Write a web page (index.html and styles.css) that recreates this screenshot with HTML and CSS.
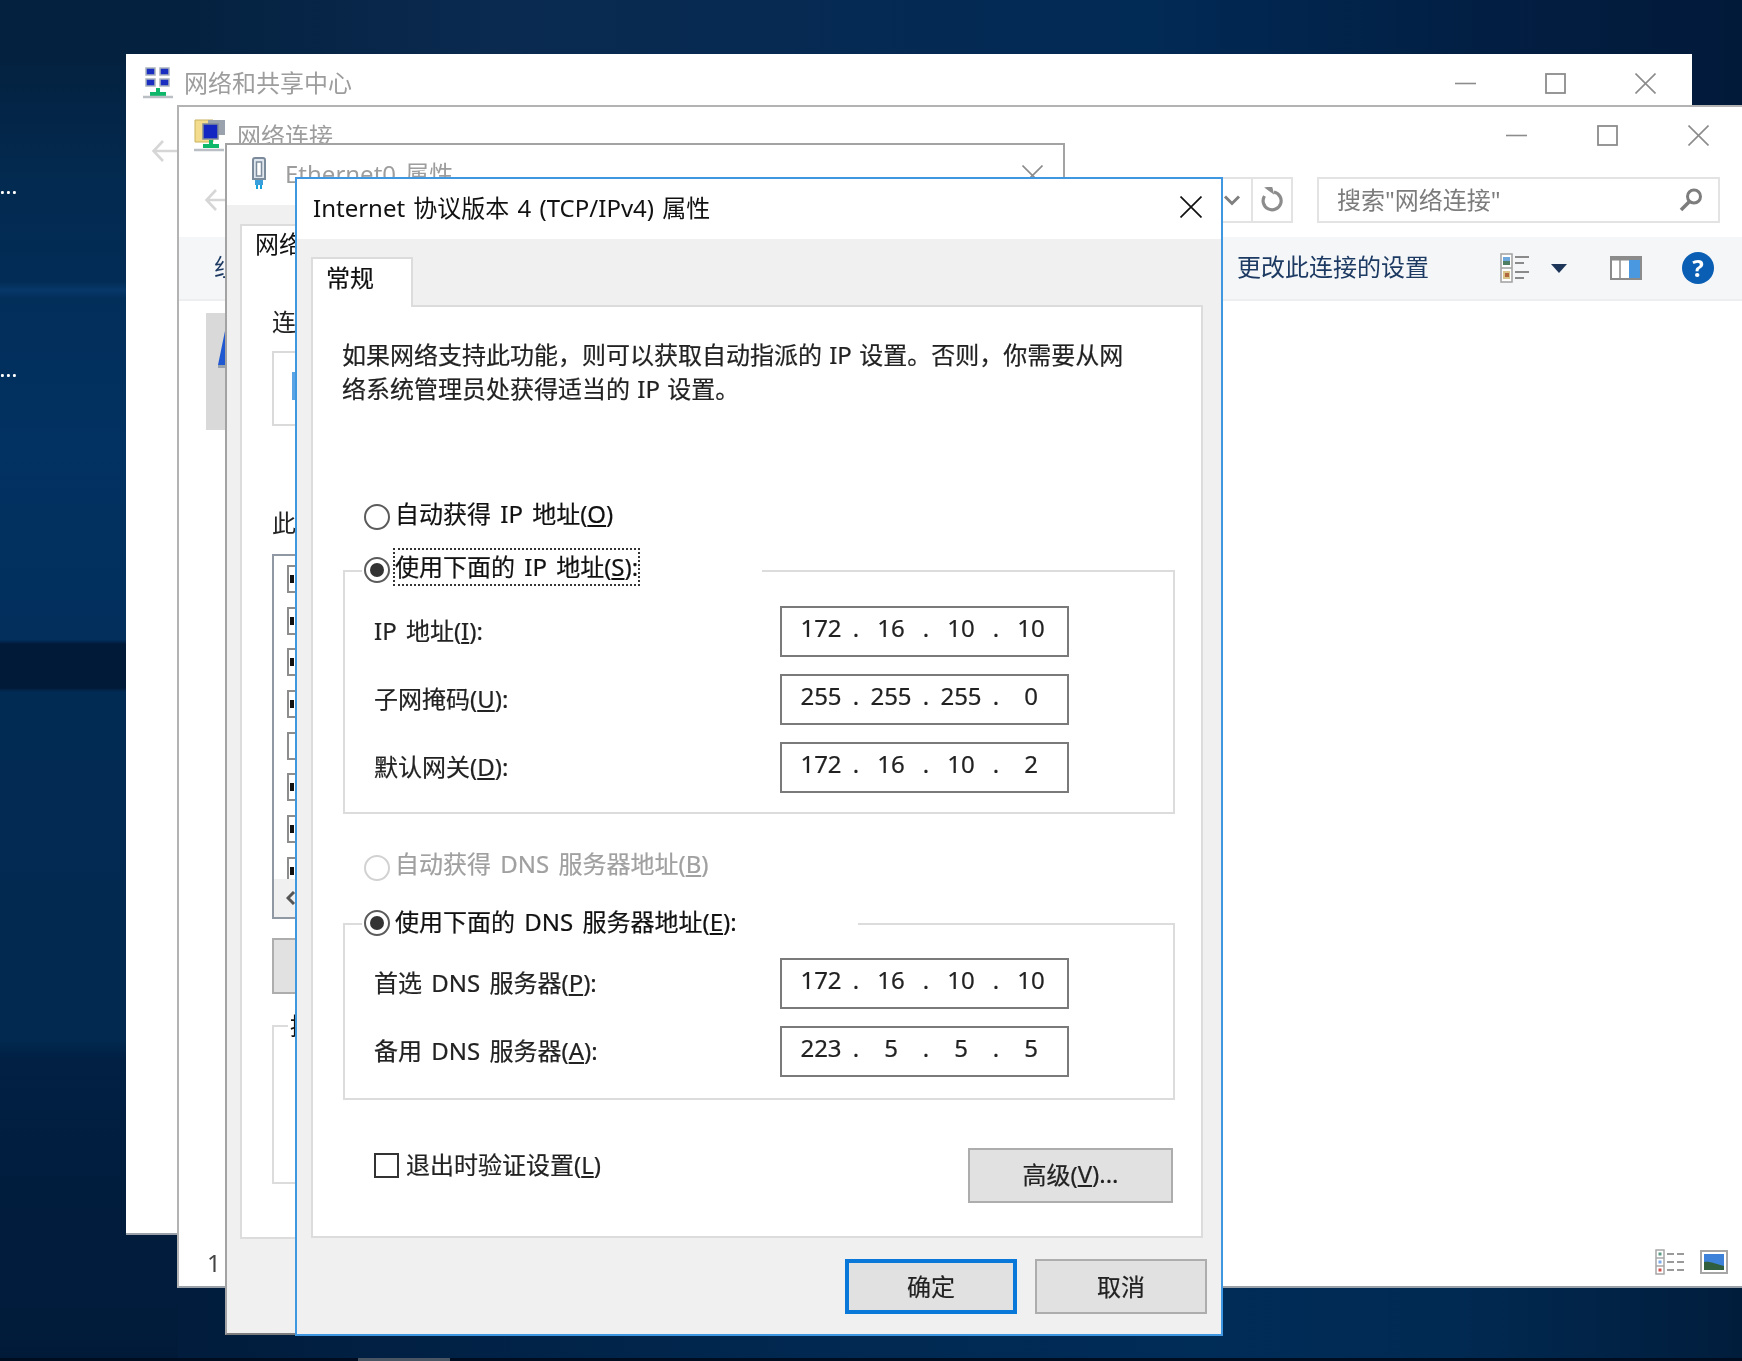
FILE: index.html
```html
<!DOCTYPE html>
<html lang="zh-CN">
<head>
<meta charset="utf-8">
<title>Internet 协议版本 4 (TCP/IPv4) 属性</title>
<link rel="stylesheet" href="styles.css">
</head>
<body>
<svg class="defs" width="0" height="0" aria-hidden="true">
  <symbol id="i-min" viewBox="0 0 21 21"><path d="M0 10.5h21" stroke="currentColor" stroke-width="1.6"/></symbol>
  <symbol id="i-max" viewBox="0 0 21 21"><rect x="1" y="1" width="19" height="19" fill="none" stroke="currentColor" stroke-width="1.8"/></symbol>
  <symbol id="i-close" viewBox="0 0 21 21"><path d="M.5.5l20 20M20.5.5l-20 20" fill="none" stroke="currentColor" stroke-width="1.6"/></symbol>
  <symbol id="i-back" viewBox="0 0 26 22"><path d="M11 1L1.500 11l9.500 10M2 11h24" fill="none" stroke="currentColor" stroke-width="2.600"/></symbol>
</svg>
<main class="desktop">
  <span class="desk-label desk-label-a">...</span>
  <span class="desk-label desk-label-b">...</span>
  <span class="task-chip"></span>

  <section class="window win-center">
    <header class="titlebar">
      <svg class="app-icon" width="30" height="32" viewBox="0 0 30 32">
        <g fill="#1a2fc0" stroke="#a9b3bd" stroke-width="1.500">
          <rect x="3" y="1" width="9" height="7"/><rect x="17" y="1" width="9" height="7"/>
          <rect x="3" y="12" width="9" height="7"/><rect x="17" y="12" width="9" height="7"/>
        </g>
        <path d="M13 21h4v4h6v4H7v-4h6z" fill="#0fb76a"/>
        <path d="M0 30h30" stroke="#b9bfc4" stroke-width="2.500"/>
      </svg>
      <h2 class="win-title">网络和共享中心</h2>
      <div class="win-controls">
        <svg class="ctl"><use href="#i-min"/></svg>
        <svg class="ctl"><use href="#i-max"/></svg>
        <svg class="ctl"><use href="#i-close"/></svg>
      </div>
    </header>
    <div class="nav-one"><svg class="back" width="26" height="22"><use href="#i-back"/></svg></div>
  </section>

  <section class="window win-conn">
    <header class="titlebar titlebar-conn">
      <svg class="app-icon" width="33" height="33" viewBox="0 0 33 33">
        <path d="M1 1h18v22H1z" fill="#f3dc8e" stroke="#c9b25c"/>
        <rect x="14" y="1" width="17" height="15" fill="#9aa3ad"/>
        <rect x="9" y="5" width="15" height="15" fill="#1326c2" stroke="#7f8a99" stroke-width="1.500"/>
        <path d="M15 21h4v4h6v4H9v-4h6z" fill="#0fb76a"/>
        <path d="M0 31h30" stroke="#b9bfc4" stroke-width="2.500"/>
      </svg>
      <h2 class="win-title">网络连接</h2>
      <div class="win-controls">
        <svg class="ctl"><use href="#i-min"/></svg>
        <svg class="ctl"><use href="#i-max"/></svg>
        <svg class="ctl"><use href="#i-close"/></svg>
      </div>
    </header>
    <div class="address-row">
      <svg class="back" width="26" height="22"><use href="#i-back"/></svg>
      <div class="address-box">
        <svg class="chevron" width="18" height="11" viewBox="0 0 18 11"><path d="M2 1.500l7 7 7-7" fill="none" stroke="#7f7f7f" stroke-width="3"/></svg>
        <span class="refresh">
          <svg width="24" height="26" viewBox="0 0 24 26"><path d="M13 5a9 9 0 1 1-9.500 4" fill="none" stroke="#8c8c8c" stroke-width="3.200"/><path d="M5 1l7 5-1.500-6z" fill="#8c8c8c" stroke="#8c8c8c" stroke-width="1.500"/></svg>
        </span>
      </div>
      <div class="search-box">
        <span class="search-text">搜索"网络连接"</span>
        <svg width="26" height="26" viewBox="0 0 26 26"><circle cx="16" cy="9.500" r="6.500" fill="none" stroke="#7d7d7d" stroke-width="3"/><path d="M11.500 14.500L3 23" stroke="#7d7d7d" stroke-width="3.500"/></svg>
      </div>
    </div>
    <div class="toolbar">
      <span class="tool-text">组织</span>
      <span class="tool-spacer"></span>
      <span class="tool-text">更改此连接的设置</span>
      <svg class="tool-views" width="30" height="30" viewBox="0 0 30 30">
        <rect x="1" y="1" width="11" height="28" fill="#fff" stroke="#a6a6a6" stroke-width="1.600"/>
        <path d="M1 15h11" stroke="#a6a6a6" stroke-width="1.600"/>
        <rect x="3" y="4" width="7" height="4" fill="#6ea7dc"/><rect x="3" y="8" width="7" height="4" fill="#4f7f62"/>
        <rect x="3" y="18" width="7" height="8" fill="#d9c48a"/><rect x="5" y="20" width="4" height="4" fill="#b0683c"/>
        <path d="M15 4h14M15 10h9M15 19h14M15 25h9" stroke="#8a8a8a" stroke-width="1.800"/>
      </svg>
      <svg class="tool-caret" width="16" height="9" viewBox="0 0 16 9"><path d="M0 0h16L8 9z" fill="#1c3559"/></svg>
      <svg class="tool-pane" width="32" height="24" viewBox="0 0 32 24">
        <rect x="1" y="1" width="30" height="22" fill="#fff" stroke="#8b8b8b" stroke-width="2"/>
        <path d="M1 3h30" stroke="#8b8b8b" stroke-width="3"/>
        <path d="M10 4v18" stroke="#8b8b8b" stroke-width="1.500"/>
        <rect x="19" y="4" width="11" height="18" fill="#4a98e0"/>
      </svg>
      <span class="tool-help">?</span>
    </div>
    <div class="conn-body">
      <div class="conn-item">
        <svg width="20" height="38" viewBox="0 0 20 38"><path d="M8 0h12v34H1z" fill="#1f58d0"/><path d="M1 34h19v3H1z" fill="#9aa3ad"/></svg>
      </div>
    </div>
    <footer class="statusbar">
      <span class="status-count">1</span>
      <svg class="status-list" width="30" height="26" viewBox="0 0 30 26">
        <rect x="1" y="1" width="8" height="24" fill="#fff" stroke="#a6a6a6" stroke-width="1.500"/>
        <path d="M1 9h8M1 17h8" stroke="#a6a6a6" stroke-width="1.500"/>
        <path d="M12 5h7M22 5h7M12 13h7M22 13h7M12 21h7M22 21h7" stroke="#9a9a9a" stroke-width="2.200"/>
        <rect x="3.500" y="3.500" width="3" height="3" fill="#5a9a86"/><rect x="3.500" y="11.500" width="3" height="3" fill="#79a9ea"/><rect x="3.500" y="19.500" width="3" height="3" fill="#d2504a"/>
      </svg>
      <svg class="status-pic" width="28" height="24" viewBox="0 0 28 24">
        <rect x="1" y="1" width="26" height="22" fill="#fff" stroke="#a6a6a6" stroke-width="2"/>
        <rect x="4" y="4" width="20" height="16" fill="#3d82d8"/>
        <path d="M4 12c6-1 11 2 20 4v4H4z" fill="#2f5f3f"/>
      </svg>
    </footer>
  </section>

  <section class="window win-eth">
    <header class="titlebar titlebar-eth">
      <svg class="app-icon" width="18" height="32" viewBox="0 0 18 32">
        <path d="M3 3a2 2 0 0 1 2-2h8a2 2 0 0 1 2 2v19H3z" fill="#dfe6ee" stroke="#7c8b9c" stroke-width="2"/>
        <rect x="6.500" y="5" width="5" height="14" fill="#fff" stroke="#7c8b9c" stroke-width="1.500"/>
        <path d="M5 23h8v5H5z" fill="#3a9fdb"/><path d="M6 28h2v4H6zM10 28h2v4h-2z" fill="#16a0d8"/>
      </svg>
      <h2 class="win-title">Ethernet0 属性</h2>
      <svg class="ctl eth-close"><use href="#i-close"/></svg>
    </header>
    <div class="eth-body">
      <div class="tabstrip"><span class="tab tab-eth">网络</span></div>
      <div class="eth-panel">
        <p class="eth-label">连</p>
        <div class="eth-adapter"><span class="adapter-chip"></span></div>
        <p class="eth-label eth-label-list">此</p>
        <ul class="eth-list">
          <li class="eth-row on"></li>
          <li class="eth-row on"></li>
          <li class="eth-row on"></li>
          <li class="eth-row on"></li>
          <li class="eth-row"></li>
          <li class="eth-row on"></li>
          <li class="eth-row on"></li>
          <li class="eth-row on"></li>
          <li class="eth-scroll"><svg width="10" height="14" viewBox="0 0 10 14"><path d="M8 1L2 7l6 6" fill="none" stroke="#555" stroke-width="3"/></svg></li>
        </ul>
        <button class="eth-install" type="button"></button>
        <fieldset class="eth-desc"><legend class="eth-desc-title">描</legend></fieldset>
      </div>
    </div>
  </section>

  <section class="window dialog" aria-label="Internet 协议版本 4 (TCP/IPv4) 属性">
    <header class="dialog-title">
      <h1 class="dialog-heading">Internet 协议版本 4 (TCP/IPv4) 属性</h1>
      <svg class="ctl dialog-close"><use href="#i-close"/></svg>
    </header>
    <div class="dialog-body">
      <div class="tabstrip"><span class="tab">常规</span></div>
      <div class="panel">
        <p class="intro">如果网络支持此功能，则可以获取自动指派的 IP 设置。否则，你需要从网<br>络系统管理员处获得适当的 IP 设置。</p>

        <div class="radio radio-first"><span class="dot"></span><span>自动获得 IP 地址(<u>O</u>)</span></div>

        <fieldset class="group">
          <legend class="legend legend-ip">
            <span class="radio"><span class="dot checked"></span><span class="focus">使用下面的 IP 地址(<u>S</u>):</span></span>
          </legend>
          <div class="fields">
            <label class="field-label">IP 地址(<u>I</u>):</label>
            <div class="ipbox"><span class="oct">172</span><i>.</i><span class="oct">16</span><i>.</i><span class="oct">10</span><i>.</i><span class="oct">10</span></div>
            <label class="field-label">子网掩码(<u>U</u>):</label>
            <div class="ipbox"><span class="oct">255</span><i>.</i><span class="oct">255</span><i>.</i><span class="oct">255</span><i>.</i><span class="oct">0</span></div>
            <label class="field-label">默认网关(<u>D</u>):</label>
            <div class="ipbox"><span class="oct">172</span><i>.</i><span class="oct">16</span><i>.</i><span class="oct">10</span><i>.</i><span class="oct">2</span></div>
          </div>
        </fieldset>

        <div class="radio radio-disabled"><span class="dot"></span><span>自动获得 DNS 服务器地址(<u>B</u>)</span></div>

        <fieldset class="group group-dns">
          <legend class="legend legend-dns">
            <span class="radio"><span class="dot checked"></span><span>使用下面的 DNS 服务器地址(<u>E</u>):</span></span>
          </legend>
          <div class="fields">
            <label class="field-label">首选 DNS 服务器(<u>P</u>):</label>
            <div class="ipbox"><span class="oct">172</span><i>.</i><span class="oct">16</span><i>.</i><span class="oct">10</span><i>.</i><span class="oct">10</span></div>
            <label class="field-label">备用 DNS 服务器(<u>A</u>):</label>
            <div class="ipbox"><span class="oct">223</span><i>.</i><span class="oct">5</span><i>.</i><span class="oct">5</span><i>.</i><span class="oct">5</span></div>
          </div>
        </fieldset>

        <div class="panel-foot">
          <div class="check"><span class="box"></span><span class="check-text">退出时验证设置(<u>L</u>)</span></div>
          <button class="btn btn-adv" type="button">高级(<u>V</u>)...</button>
        </div>
      </div>
      <footer class="dialog-foot">
        <button class="btn btn-ok" type="button">确定</button>
        <button class="btn btn-main" type="button">取消</button>
      </footer>
    </div>
  </section>
</main>
</body>
</html>
```
FILE: styles.css
```css
* { box-sizing: border-box; }
html, body { margin: 0; height: 100%; overflow: hidden; background: #02264d; }
body, button { font-family: "Noto Sans", "Noto Sans CJK SC", sans-serif; font-size: 24px; color: #111; }
.defs { position: absolute; }
h1, h2, p, ul { margin: 0; padding: 0; font-weight: 400; }

.desktop {
  position: relative;
  width: 1742px;
  height: 1361px;
  overflow: hidden;
  filter: blur(0.55px);
  background:
    linear-gradient(180deg, transparent 1358px, #000d20 1358px) 0 0 / 100% 100% no-repeat,
    linear-gradient(180deg, #04213f 0, #04213f 54px, #032a50 180px, #022c56 282px, #07386a 290px, #022e5a 298px, #023262 450px, #022f5c 640px, #011a38 644px, #011a38 688px, #022b54 692px, #02294f 1040px, #012044 1058px, #011c3c 1230px, #011c3c 1300px, #011a38 1361px) 0 0 / 178px 100% no-repeat,
    linear-gradient(90deg, #011c3c 0, #011c3c 178px, #012850 800px, #002c58 1200px, #012a52 1450px, #011d3c 1742px) 0 100% / 100% 80px no-repeat,
    linear-gradient(90deg, #04213f 0, #04213f 178px, #0a2a50 500px, #012a55 1150px, #021e42 1500px, #021a3a 1742px) 0 0 / 100% 110px no-repeat,
    #011d3e;
}

.desk-label { position: absolute; left: 0; color: #fff; font-size: 17px; font-weight: 700; line-height: 16px; letter-spacing: 1.200px; }
.desk-label-a { top: 180px; }
.desk-label-b { top: 363px; }
.task-chip { position: absolute; left: 358px; top: 1358px; width: 92px; height: 3px; background: #4a5563; }

/* windows on the desktop */
.window { position: absolute; background: #fff; display: flex; flex-direction: column; isolation: isolate; word-spacing: 3px; }
.win-center { left: 126px; top: 54px; width: 1566px; height: 1181px; border-bottom: 2px solid #9aa1a8; }
.win-conn { left: 177px; top: 105px; width: 1565px; height: 1183px; border-top: 2px solid #b3b3b3; border-left: 2px solid #b3b3b3; border-bottom: 2px solid #9aa1a8; }
.win-eth { left: 225px; top: 143px; width: 840px; height: 1192px; border: 2px solid #a3a3a3; border-bottom-color: #7d7d7d; background: #f0f0f0; }
.dialog { left: 295px; top: 177px; width: 928px; height: 1159px; border: 2px solid #3f97e2; background: #f0f0f0; }

.titlebar { display: flex; align-items: center; height: 58px; flex: none; padding-left: 17px; background: #fff; }
.titlebar-conn { height: 56px; padding-left: 15px; }
.titlebar-eth { height: 60px; padding-left: 23px; position: relative; }
.titlebar-eth .app-icon { margin-top: -4px; }
.win-title { font-size: 24px; color: #9d9d9d; margin-left: 11px; padding-bottom: 4px; }
.titlebar-conn .win-title { margin-left: 10px; padding-bottom: 2px; }
.titlebar-eth .win-title { margin-left: 17px; padding-bottom: 6px; }
.win-controls { display: flex; gap: 69px; margin-left: auto; padding-right: 36px; color: #8c8c8c; }
.titlebar-conn .win-controls { gap: 70px; padding-right: 33px; }
.ctl { width: 21px; height: 21px; flex: none; }
.eth-close { margin-left: auto; margin-right: 20px; color: #8c8c8c; }

.nav-one { padding: 24px 0 0 26px; }
.back { color: #d6d6d6; flex: none; }

.address-row { display: flex; align-items: center; gap: 24px; height: 46px; margin-top: 14px; padding: 0 22px 0 26px; flex: none; }
.address-box { display: flex; align-items: stretch; flex: 1; height: 46px; border: 2px solid #e3e3e3; justify-content: flex-end; }
.chevron { align-self: center; margin-right: 10px; }
.refresh { display: flex; align-items: center; justify-content: center; width: 40px; padding-left: 2px; border-left: 2px solid #e3e3e3; }
.search-box { display: flex; align-items: center; justify-content: space-between; width: 403px; height: 46px; border: 2px solid #e3e3e3; padding: 0 14px 0 18px; flex: none; }
.search-text { color: #7c7c7c; padding-bottom: 4px; }

.toolbar { display: flex; align-items: center; height: 64px; margin-top: 14px; padding: 0 28px 0 35px; background: #f4f6f8; border-bottom: 2px solid #eceef0; flex: none; }
.tool-text { color: #1d3a63; padding-bottom: 6px; }
.tool-spacer { flex: 1; }
.tool-views { margin-left: 71px; }
.tool-caret { margin-left: 21px; }
.tool-pane { margin-left: 43px; }
.tool-help { display: flex; align-items: center; justify-content: center; width: 32px; height: 32px; margin-left: 40px; border-radius: 50%; background: #0a5fb4; color: #fff; font-weight: 700; font-size: 24px; line-height: 1; }

.conn-body { flex: 1; padding: 12px 0 0 27px; }
.conn-item { width: 60px; height: 117px; background: #d9d9d9; padding: 18px 0 0 11px; }

.statusbar { display: flex; align-items: center; height: 48px; padding: 0 14px 0 28px; flex: none; }
.status-count { color: #444; font-size: 24px; }
.status-list { margin-left: auto; }
.status-pic { margin-left: 15px; }

/* Ethernet0 dialog, mostly covered */
.eth-body { flex: 1; display: flex; flex-direction: column; padding: 19px 24px 94px 13px; }
.tabstrip { display: flex; flex: none; }
.tab { display: flex; align-items: center; height: 50px; padding: 0 13px 13px; background: #fff; border: 2px solid #dcdcdc; border-bottom: 0; margin-bottom: -2px; position: relative; z-index: 1; }
.tab-eth { height: 44px; padding-bottom: 10px; }
.eth-panel { flex: 1; display: flex; flex-direction: column; padding: 37px 0 0 30px; background: #fff; border: 2px solid #dcdcdc; }
.eth-label { line-height: 34px; color: #222; }
.eth-adapter { width: 300px; height: 75px; margin-top: 12px; border: 2px solid #dadada; padding: 19px 0 0 18px; }
.adapter-chip { display: block; width: 14px; height: 28px; background: #5aa3e4; }
.eth-label-list { margin-top: 80px; }
.eth-list { position: relative; list-style: none; width: 720px; height: 365px; margin-top: 14px; border: 2px solid #8f98a3; padding: 8px 0 0 13px; }
.eth-row { height: 41.700px; padding-top: 1px; }
.eth-row::before { content: ""; display: block; width: 24px; height: 24px; border: 2px solid #8d8d8d; background: #fff; }
.eth-row.on::before { background: linear-gradient(#111, #111) 1px 50% / 4px 8px no-repeat, #fff; }
.eth-scroll { position: absolute; left: 0; right: 0; bottom: 0; height: 38px; background: #f0f0f0; display: flex; align-items: center; padding-left: 12px; }
.eth-install { display: block; width: 150px; height: 56px; margin-top: 19px; background: #e1e1e1; border: 2px solid #adadad; }
.eth-desc { margin: 20px 70px 0 0; padding: 0; height: 170px; border: 2px solid #dcdcdc; min-width: 0; }
.eth-desc-title { margin-left: 14px; padding: 0 2px; line-height: 24px; }

/* front dialog */
.dialog-title { display: flex; align-items: center; justify-content: space-between; height: 60px; padding: 0 19px 0 16px; background: #fff; flex: none; }
.dialog-heading { font-size: 24px; color: #111; word-spacing: 2px; padding-bottom: 6px; }
.dialog-close { color: #111; width: 22px; height: 22px; margin-top: -4px; }
.dialog-body { flex: 1; display: flex; flex-direction: column; padding: 18px 14px 0; -webkit-text-stroke: 0.2px currentColor; }
.dialog-body .tab { width: 102px; }
.panel { width: 892px; height: 933px; background: #fff; border: 2px solid #dcdcdc; padding: 31px 0 0; flex: none; }
.intro { margin-left: 29px; line-height: 34px; color: #222; word-spacing: 1px; }

.radio { display: flex; align-items: center; gap: 5px; height: 34px; }
.radio-first { margin: 89px 0 0 51px; }
.radio-first .dot { top: 5px; }
.radio-disabled { margin: 31px 0 0 51px; color: #a0a0a0; }
.radio-disabled .dot { top: 6px; }
.dot { width: 26px; height: 26px; flex: none; border-radius: 50%; border: 2px solid #5b5b5b; background: #fff; position: relative; top: 3px; }
.radio-disabled .dot { border-color: #d2d2d2; }
.dot.checked::after { content: ""; position: absolute; inset: 4px; border-radius: 50%; background: #333; }
.focus { outline: 2px dotted #333; outline-offset: 0; line-height: 34px; }

.group { margin: 25px 0 0 30px; width: 832px; min-width: 0; padding: 0 0 19px; border: 2px solid #dcdcdc; }
.group-dns { margin-top: 28px; padding-bottom: 21px; }
.legend { padding: 0 0 0 2px; margin-left: 17px; height: 34px; }
.legend .radio { margin-top: -4px; }
.legend-ip { width: 400px; }
.legend-dns { width: 496px; }
.fields { display: grid; grid-template-columns: 406px 289px; row-gap: 17px; align-items: center; padding: 18px 0 0 29px; }
.group-dns .fields { padding-top: 17px; }
.field-label { color: #222; padding-bottom: 5px; }
.ipbox { display: flex; align-items: center; height: 51px; padding: 0 0 8px 14px; border: 2px solid #7a7a7a; background: #fff; }
.oct { width: 50px; text-align: center; line-height: 30px; color: #222; }
.ipbox i { width: 20px; text-align: center; font-style: normal; line-height: 30px; color: #222; }

.panel-foot { display: flex; justify-content: space-between; align-items: flex-start; margin-top: 48px; padding: 0 28px 0 61px; }
.check { display: flex; align-items: center; gap: 7px; height: 34px; color: #222; }
.check-text { padding-bottom: 4px; }
.box { width: 25px; height: 25px; border: 2px solid #333; background: #fff; }

.btn { display: flex; align-items: center; justify-content: center; padding: 0 0 3px; background: #e1e1e1; border: 2px solid #adadad; color: #222; -webkit-text-stroke: 0.2px currentColor; }
.btn-adv { width: 205px; height: 55px; padding-bottom: 5px; }
.btn-main { width: 172px; height: 55px; }
.btn-ok { width: 172px; height: 55px; border: 4px solid #0a78d8; }
.dialog-foot { display: flex; justify-content: flex-end; gap: 18px; padding-top: 21px; }
```
